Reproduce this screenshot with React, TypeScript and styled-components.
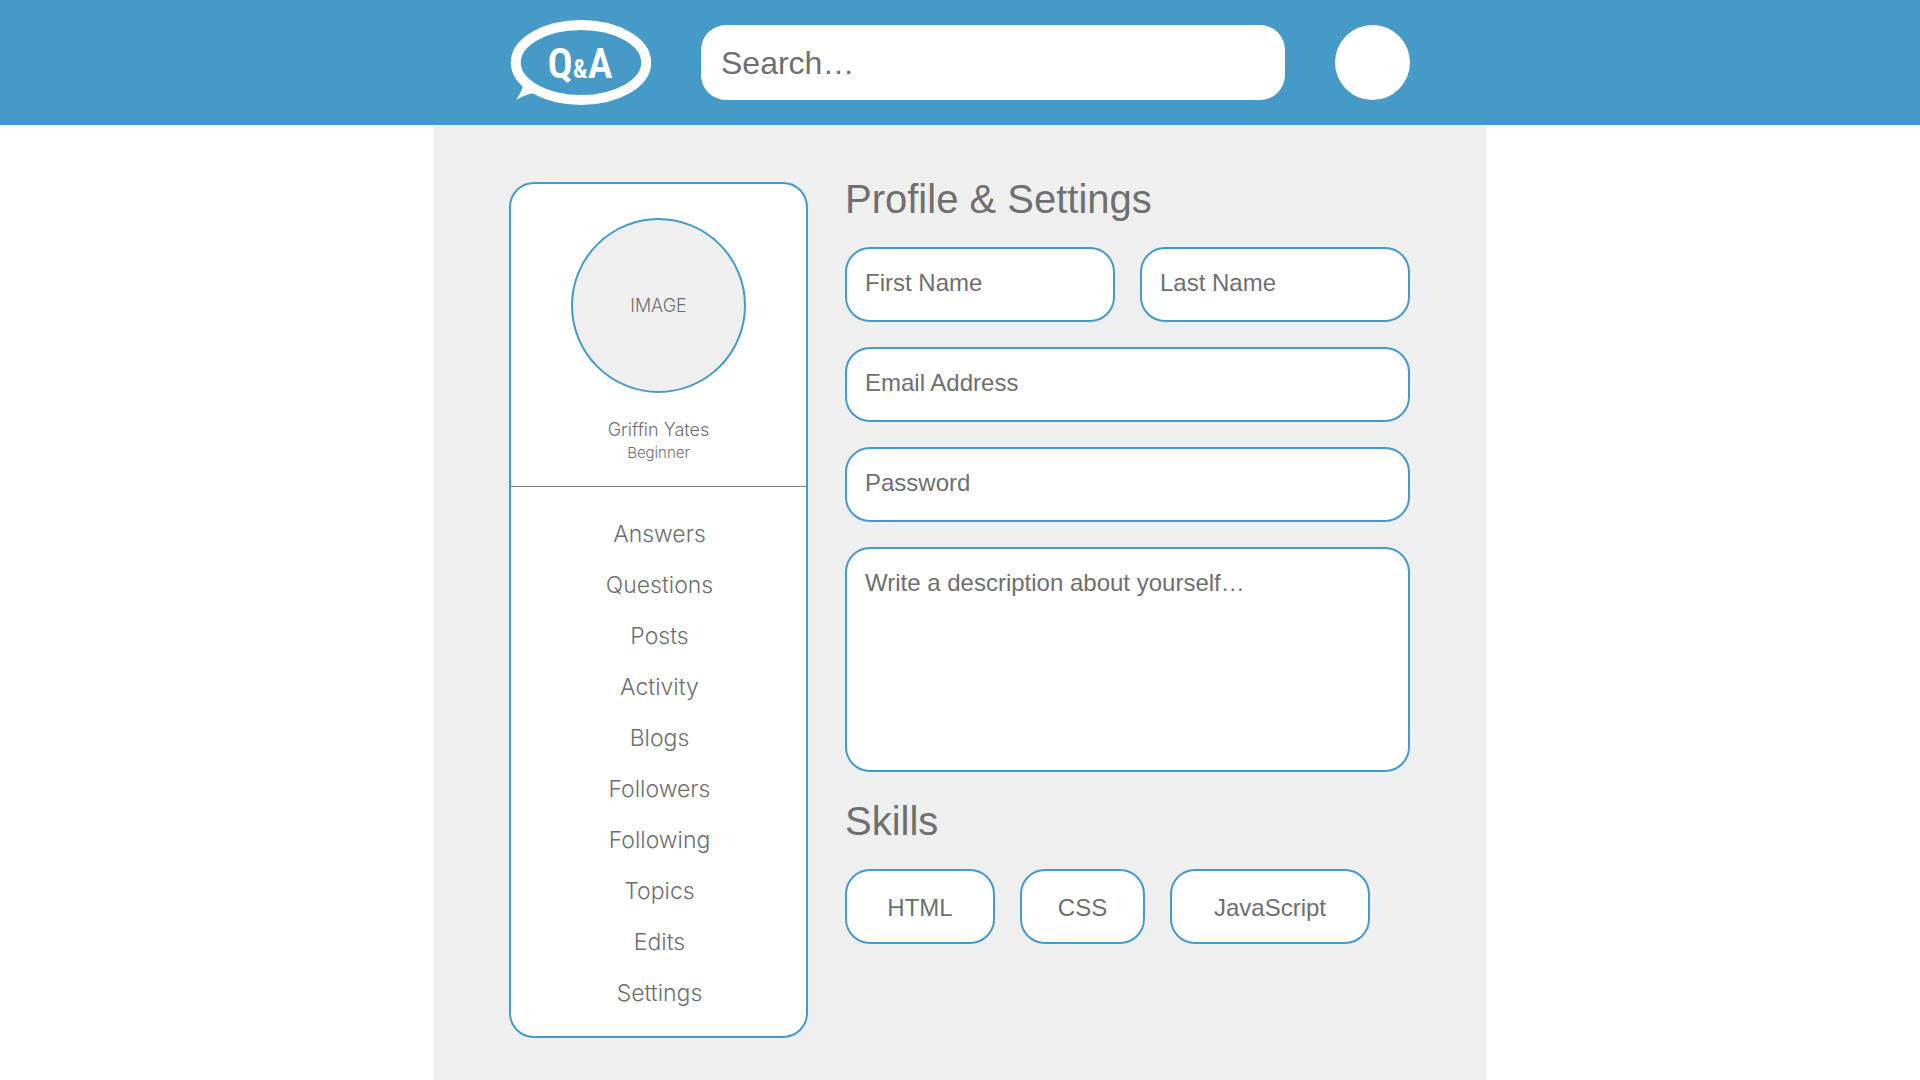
import React from "react";
import styled, { createGlobalStyle } from "styled-components";

const blue = "#469ac7";
const gray = "#6f6f6f";
const paper = "#efefef";
const sans = '"Helvetica Neue", "Liberation Sans", Arial, sans-serif';
const light = '"Inter", "Liberation Sans", Arial, sans-serif';

const GlobalStyle = createGlobalStyle`
  *, *::before, *::after { box-sizing: border-box; }
  body {
    margin: 0;
    background: #ffffff;
    color: ${gray};
    font-family: ${sans};
  }
`;

const Header = styled.header`
  background: ${blue};
`;

const HeaderInner = styled.div`
  display: flex;
  align-items: center;
  gap: 50px;
  max-width: 1052px;
  margin: 0 auto;
  padding: 20px 76px 20px 75px;
`;

const HomeLink = styled.a`
  display: block;
  flex: none;
  height: 85px;
`;

const SearchForm = styled.form`
  display: flex;
  flex: 1;
  min-width: 0;
`;

const SearchInput = styled.input`
  width: 100%;
  height: 75px;
  padding: 2px 20px 0;
  border: 0;
  border-radius: 25px;
  background: #ffffff;
  color: ${gray};
  font: 32px ${sans};

  &::placeholder { color: ${gray}; opacity: 1; }
`;

const AccountButton = styled.button`
  flex: none;
  width: 75px;
  height: 75px;
  padding: 0;
  border: 0;
  border-radius: 50%;
  background: #ffffff;
`;

const Main = styled.main`
  display: flex;
  align-items: flex-start;
  gap: 37px;
  max-width: 1052px;
  margin: 0 auto;
  padding: 57px 76px 42px 75px;
  background: ${paper};
`;

const Sidebar = styled.aside`
  flex: none;
  width: 299px;
  border: 2px solid ${blue};
  border-radius: 25px;
  background: #ffffff;
  font-family: ${light};
  font-weight: 300;
  text-align: center;
`;

const ProfileCard = styled.div`
  display: flex;
  flex-direction: column;
  align-items: center;
  padding: 34px 20px 22px;
  border-bottom: 1px solid #808080;
`;

const Portrait = styled.div`
  display: flex;
  align-items: center;
  justify-content: center;
  width: 175px;
  height: 175px;
  margin-bottom: 25px;
  border: 2px solid ${blue};
  border-radius: 50%;
  background: ${paper};
  font-size: 18px;
`;

const UserName = styled.div`
  font-size: 18px;
  line-height: 24px;
`;

const UserLevel = styled.div`
  font-size: 15px;
  line-height: 22px;
`;

const NavList = styled.ul`
  display: flex;
  flex-direction: column;
  gap: 23px;
  margin: 0;
  padding: 33px 20px 29px 22px;
  list-style: none;
`;

const NavLink = styled.a`
  display: block;
  color: inherit;
  font-size: 23px;
  line-height: 28px;
  text-decoration: none;
`;

const Content = styled.div`
  flex: 1;
  min-width: 0;
`;

const Heading = styled.h2`
  margin: 0 0 31px;
  font-size: 40px;
  font-weight: 400;
  line-height: 34px;
`;

const ProfileForm = styled.form`
  display: grid;
  grid-template-columns: 1fr 1fr;
  gap: 25px;
  margin-bottom: 32px;
`;

const Field = styled.input<{ $wide?: boolean }>`
  grid-column: ${(p) => (p.$wide ? "1 / -1" : "auto")};
  width: 100%;
  height: 75px;
  padding: 0 18px 4px;
  border: 2px solid ${blue};
  border-radius: 25px;
  background: #ffffff;
  color: ${gray};
  font: 24px ${sans};

  &::placeholder { color: ${gray}; opacity: 1; }
`;

const Description = styled.textarea`
  grid-column: 1 / -1;
  display: block;
  width: 100%;
  height: 225px;
  padding: 20px 18px;
  border: 2px solid ${blue};
  border-radius: 25px;
  background: #ffffff;
  color: ${gray};
  font: 24px/28px ${sans};
  resize: none;

  &::placeholder { color: ${gray}; opacity: 1; }
`;

const Skills = styled.div`
  display: flex;
  flex-wrap: wrap;
  gap: 25px;
`;

const Skill = styled.button<{ $width: number }>`
  width: ${(p) => p.$width}px;
  height: 75px;
  padding: 2px 0 0;
  border: 2px solid ${blue};
  border-radius: 25px;
  background: #ffffff;
  color: ${gray};
  font: 24px ${sans};
`;

const LogoText = styled.text`
  fill: #ffffff;
  font-family: "Roboto Condensed", "Roboto", sans-serif;
  font-size: 42px;
  font-weight: 600;
  text-anchor: middle;
`;

const Ampersand = styled.tspan`
  font-size: 26px;
`;

const Logo = () => (
  <svg width="142" height="85" viewBox="0 0 142 85" role="img" aria-label="Q&A">
    <ellipse cx="72" cy="42.5" rx="65.2" ry="37.5" fill="none" stroke="#fff" strokeWidth="10" />
    <path d="M14 65.5 Q12.5 72 7 80 Q15 75 24.5 73 Z" fill="#fff" />
    <LogoText x="71" y="58">
      Q<Ampersand>&amp;</Ampersand>A
    </LogoText>
  </svg>
);

const navItems = [
  "Answers",
  "Questions",
  "Posts",
  "Activity",
  "Blogs",
  "Followers",
  "Following",
  "Topics",
  "Edits",
  "Settings",
];

const skills = [
  { name: "HTML", width: 150 },
  { name: "CSS", width: 125 },
  { name: "JavaScript", width: 200 },
];

export default function App() {
  return (
    <>
      <GlobalStyle />
      <Header>
        <HeaderInner>
          <HomeLink href="#">
            <Logo />
          </HomeLink>
          <SearchForm role="search">
            <SearchInput type="search" aria-label="Search" placeholder="Search…" />
          </SearchForm>
          <AccountButton type="button" aria-label="Account" />
        </HeaderInner>
      </Header>
      <Main>
        <Sidebar>
          <ProfileCard>
            <Portrait>IMAGE</Portrait>
            <UserName>Griffin Yates</UserName>
            <UserLevel>Beginner</UserLevel>
          </ProfileCard>
          <nav>
            <NavList>
              {navItems.map((item) => (
                <li key={item}>
                  <NavLink href={`#${item.toLowerCase()}`}>{item}</NavLink>
                </li>
              ))}
            </NavList>
          </nav>
        </Sidebar>
        <Content>
          <Heading>Profile &amp; Settings</Heading>
          <ProfileForm>
            <Field aria-label="First Name" placeholder="First Name" />
            <Field aria-label="Last Name" placeholder="Last Name" />
            <Field $wide type="email" aria-label="Email Address" placeholder="Email Address" />
            <Field $wide type="password" aria-label="Password" placeholder="Password" />
            <Description aria-label="Description" placeholder="Write a description about yourself…" />
          </ProfileForm>
          <Heading>Skills</Heading>
          <Skills>
            {skills.map((skill) => (
              <Skill key={skill.name} type="button" $width={skill.width}>
                {skill.name}
              </Skill>
            ))}
          </Skills>
        </Content>
      </Main>
    </>
  );
}
